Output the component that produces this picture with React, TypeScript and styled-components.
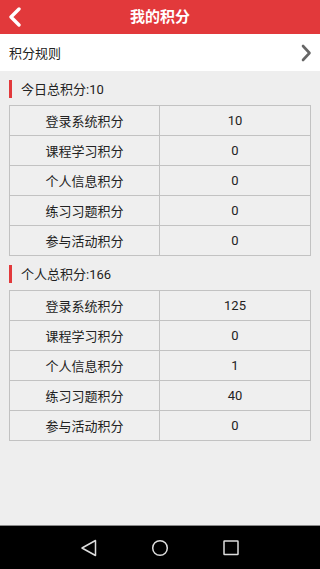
import React from "react";
import styled, { createGlobalStyle } from "styled-components";

const Global = createGlobalStyle`
  html, body { margin: 0; padding: 0; }
  body {
    font-family: Roboto, "Noto Sans CJK SC", sans-serif;
    background: #eeeeee;
    color: #222;
  }
  * { box-sizing: border-box; }
`;

const Screen = styled.div`
  width: 320px;
  height: 569px;
  display: flex;
  flex-direction: column;
  background: #eeeeee;
  overflow: hidden;
`;

const TopBar = styled.header`
  height: 34px;
  flex: none;
  background: #e2393b;
  display: grid;
  grid-template-columns: 40px 1fr 40px;
  align-items: center;
`;

const BackButton = styled.div`
  display: flex;
  align-items: center;
  padding-left: 7px;
  height: 100%;
`;

const Title = styled.h1`
  margin: 0;
  text-align: center;
  color: #fff;
  font-size: 15px;
  font-weight: 700;
  line-height: 34px;
`;

const RuleRow = styled.div`
  height: 37px;
  flex: none;
  background: #fff;
  display: flex;
  align-items: center;
  justify-content: space-between;
  padding: 0 8px 0 9px;
  font-size: 13px;
  color: #222;
`;

const Content = styled.main`
  flex: 1;
  padding: 0 9px;
`;

const SectionTitle = styled.div`
  height: 34px;
  display: flex;
  align-items: center;
  gap: 9px;
  font-size: 13px;
  color: #222;
  padding-top: 1px;
  &::before {
    content: "";
    width: 3px;
    height: 18px;
    background: #e2393b;
  }
`;

const Table = styled.div`
  display: grid;
  grid-template-columns: 150px 1fr;
  border-top: 1px solid #c2c2c2;
  border-left: 1px solid #c2c2c2;
  background: #efefef;
`;

const Cell = styled.div`
  height: 30px;
  display: flex;
  align-items: center;
  justify-content: center;
  border-right: 1px solid #c2c2c2;
  border-bottom: 1px solid #c2c2c2;
  font-size: 13px;
  color: #222;
`;

const NavBar = styled.nav`
  height: 44px;
  flex: none;
  background: #000;
  border-top: 1px solid #8a8a8a;
  display: flex;
  align-items: center;
  justify-content: center;
  gap: 53px;
  padding-top: 1px;
`;

type Item = { label: string; value: number };

const today: Item[] = [
  { label: "登录系统积分", value: 10 },
  { label: "课程学习积分", value: 0 },
  { label: "个人信息积分", value: 0 },
  { label: "练习习题积分", value: 0 },
  { label: "参与活动积分", value: 0 },
];

const total: Item[] = [
  { label: "登录系统积分", value: 125 },
  { label: "课程学习积分", value: 0 },
  { label: "个人信息积分", value: 1 },
  { label: "练习习题积分", value: 40 },
  { label: "参与活动积分", value: 0 },
];

const ScoreTable = ({ items }: { items: Item[] }) => (
  <Table>
    {items.map((it) => (
      <React.Fragment key={it.label}>
        <Cell>{it.label}</Cell>
        <Cell>{it.value}</Cell>
      </React.Fragment>
    ))}
  </Table>
);

export default function App() {
  return (
    <>
      <Global />
      <Screen>
        <TopBar>
          <BackButton>
            <svg width="16" height="20" viewBox="0 0 16 20">
              <path d="M12 2 L4 10 L12 18" fill="none" stroke="#fff" strokeWidth="3.4" strokeLinecap="round" strokeLinejoin="round" />
            </svg>
          </BackButton>
          <Title>我的积分</Title>
          <div />
        </TopBar>
        <RuleRow>
          <span>积分规则</span>
          <svg width="12" height="18" viewBox="0 0 12 18">
            <path d="M3 2 L9.5 9 L3 16" fill="none" stroke="#666" strokeWidth="2.6" strokeLinecap="round" strokeLinejoin="round" />
          </svg>
        </RuleRow>
        <Content>
          <SectionTitle>今日总积分:10</SectionTitle>
          <ScoreTable items={today} />
          <SectionTitle>个人总积分:166</SectionTitle>
          <ScoreTable items={total} />
        </Content>
        <NavBar>
          <svg width="18" height="18" viewBox="0 0 18 18">
            <path d="M15.5 1.5 L15.5 16.5 L2 9 Z" fill="none" stroke="#ddd" strokeWidth="1.5" strokeLinejoin="round" />
          </svg>
          <svg width="18" height="18" viewBox="0 0 18 18">
            <circle cx="9" cy="9" r="7.3" fill="none" stroke="#ddd" strokeWidth="1.5" />
          </svg>
          <svg width="18" height="18" viewBox="0 0 18 18">
            <rect x="2" y="2" width="14" height="13.5" rx="0.5" fill="none" stroke="#ddd" strokeWidth="1.5" />
          </svg>
        </NavBar>
      </Screen>
    </>
  );
}
